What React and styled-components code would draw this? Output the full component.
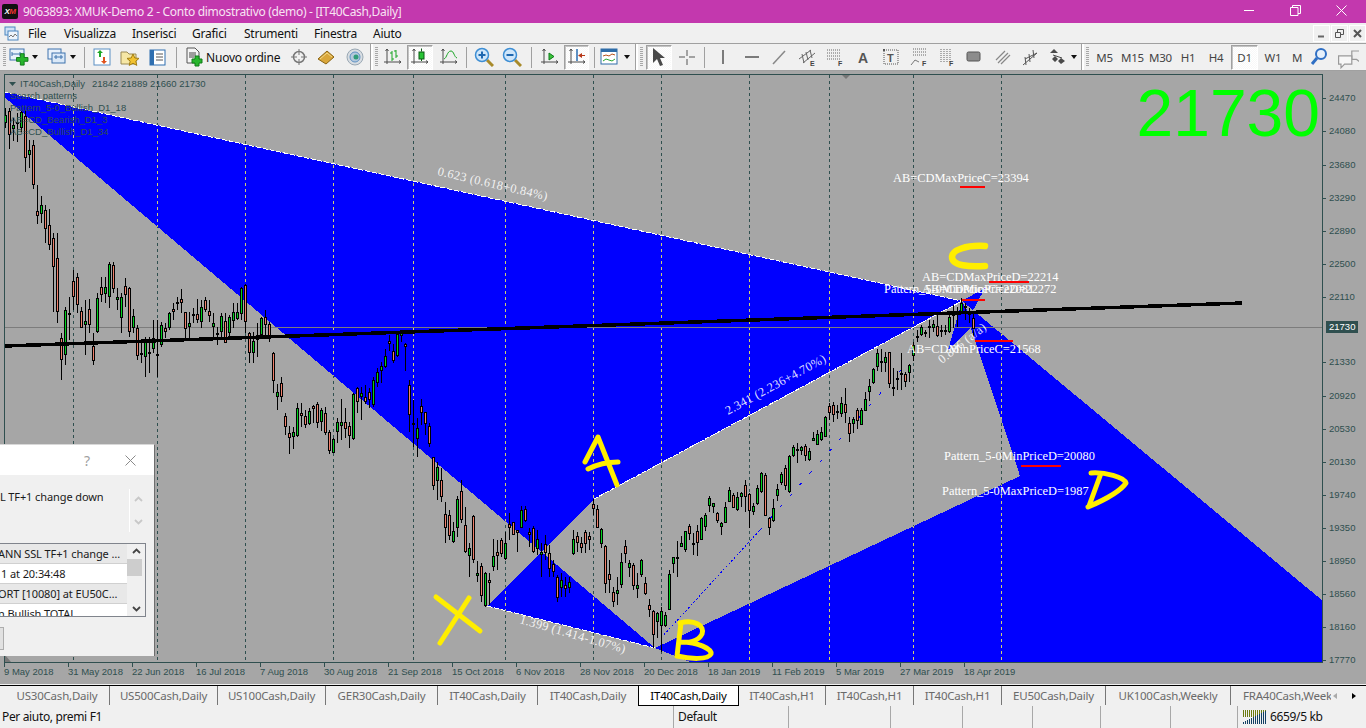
import React from 'react'
import styled, { createGlobalStyle } from 'styled-components'

const GlobalStyle = createGlobalStyle`
  html, body { margin: 0; padding: 0; width: 1366px; height: 728px; overflow: hidden; background: #f0f0f0; }
  body { font-family: "Noto Sans", sans-serif; }
`

const Window = styled.div`
  width: 1366px;
  height: 728px;
  display: flex;
  flex-direction: column;
  overflow: hidden;
`

/* title bar */
const TitleBar = styled.div`
  height: 23px;
  background: #c338ae;
  display: flex;
  align-items: center;
  color: #f8e3f3;
  font-size: 12px;
  letter-spacing: -0.3px;
`
const AppLogo = styled.div`
  width: 16px;
  height: 15px;
  margin: 0 5px 0 2px;
  background: #111;
  border-radius: 2px;
  color: #fff;
  font: italic bold 8px "Liberation Sans", sans-serif;
  letter-spacing: -0.5px;
  display: flex;
  align-items: center;
  justify-content: center;
  span { color: #e33; }
`
const WinControls = styled.div`
  margin-left: auto;
  padding-right: 2px;
  display: flex;
  align-self: flex-start;
`
const WinButton = styled.div`
  width: 46px;
  height: 20px;
  display: flex;
  align-items: center;
  justify-content: center;
`

/* menu */
const MenuBar = styled.div`
  height: 20px;
  display: flex;
  align-items: center;
  font-size: 12px;
  letter-spacing: -0.25px;
  color: #111;
  padding-left: 4px;
`
const MenuItem = styled.div`
  width: ${p => p.$w}px;
`
const MdiButtons = styled.div`
  margin-left: auto;
  display: flex;
  gap: 1px;
`
const MdiButton = styled.div`
  width: 17px;
  height: 17px;
  border: 1px solid #fff;
  box-sizing: border-box;
  display: flex;
  align-items: center;
  justify-content: center;
`

/* toolbar */
const Toolbar = styled.div`
  height: 26px;
  border-top: 1px solid #a0a0a0;
  border-bottom: 1px solid #a0a0a0;
  display: flex;
  align-items: center;
  background: #f0f0f0;
`
const Grip = styled.div`
  width: ${p => p.$w}px;
  height: 20px;
  flex: none;
  box-sizing: border-box;
  padding-left: ${p => p.$pad}px;
  &::before {
    content: '';
    display: block;
    width: 3px;
    height: 20px;
    background: repeating-linear-gradient(#a8a8a8 0 1px, transparent 1px 2px);
  }
`
const Sep = styled.div`
  width: ${p => p.$w}px;
  flex: none;
  display: flex;
  justify-content: center;
  &::before {
    content: '';
    width: 1px;
    height: 21px;
    background: #a0a0a0;
  }
`
const Break = styled.div`
  width: ${p => p.$w}px;
  flex: none;
  height: 26px;
  display: flex;
  justify-content: center;
  &::before {
    content: '';
    width: 2px;
    height: 26px;
    background: #fff;
    border-left: 1px solid #a0a0a0;
  }
`
const Spacer = styled.div`
  width: ${p => p.$w}px;
  flex: none;
`
const ToolButton = styled.div`
  width: ${p => p.$w}px;
  height: 25px;
  flex: none;
  box-sizing: border-box;
  display: flex;
  align-items: center;
  justify-content: center;
  font-size: 11.5px;
  color: #444;
  letter-spacing: -0.2px;
  ${p => p.$active && `
    border: 1px solid;
    border-color: #a0a0a0 #fff #fff #a0a0a0;
    box-shadow: inset 1px 1px 0 #c4c4c4;
    background: repeating-conic-gradient(#f8f8f8 0 25%, #fff 0 50%) 0 0 / 2px 2px;
    margin: 0 1px;
  `}
`
const OrderLabel = styled.div`
  width: ${p => p.$w}px;
  flex: none;
  font-size: 12px;
  letter-spacing: -0.2px;
  color: #111;
  white-space: nowrap;
`
const Caret = styled.div`
  width: ${p => p.$w}px;
  flex: none;
  display: flex;
  justify-content: center;
  &::before {
    content: '';
    border-left: 3.5px solid transparent;
    border-right: 3.5px solid transparent;
    border-top: 4px solid #111;
  }
`

/* chart */
const ChartPane = styled.div`
  position: relative;
  height: 613px;
  background: #a6a6a6;
  overflow: hidden;
`
const ChartSvg = styled.svg`
  display: block;
  width: 1366px;
  height: 613px;
`
const AxisText = styled.text`
  font: 9.5px "Liberation Sans", sans-serif;
  fill: #2f4f4f;
`
const ChartLabel = styled.text`
  font: 12.4px "Liberation Serif", serif;
  fill: #fff;
  letter-spacing: ${p => p.$spacing || 0}px;
`

/* dialog */
const Dialog = styled.div`
  position: absolute;
  left: 0;
  top: 373px;
  width: 155px;
  height: 212px;
  background: #f0f0f0;
  border-right: 1px solid #6d6d6d;
  border-top: 1px solid #d8d8d8;
  box-sizing: border-box;
  overflow: hidden;
  font-size: 11px;
  letter-spacing: -0.1px;
  color: #1a1a1a;
`
const DialogHead = styled.div`
  height: 30px;
  background: #fff;
  display: flex;
  align-items: center;
  justify-content: flex-end;
  gap: 35px;
  padding-right: 18px;
  color: #a0a0a0;
  font-size: 14px;
`
const DialogMessage = styled.div`
  height: 43px;
  margin-top: 14px;
  display: flex;
  justify-content: space-between;
  padding-right: 8px;
`
const MessageText = styled.div`
  margin-left: -12px;
  white-space: nowrap;
`
const MessageScroll = styled.div`
  width: 17px;
  border-left: 1px solid #fff;
  display: flex;
  flex-direction: column;
  justify-content: space-between;
  align-items: center;
  padding: 7px 0;
  box-sizing: border-box;
`
const ListBox = styled.div`
  width: 146px;
  height: 74px;
  margin-top: 11px;
  box-sizing: border-box;
  border: 1px solid #80848c;
  border-left: none;
  background: #fff;
  display: flex;
  overflow: hidden;
`
const ListRows = styled.div`
  width: 127px;
  flex: none;
  overflow: hidden;
`
const ListRow = styled.div`
  height: 20px;
  line-height: 19px;
  box-sizing: border-box;
  border-bottom: 1px solid #d0d0d0;
  background: ${p => (p.$alt ? '#e8e8e8' : '#fff')};
  white-space: nowrap;
  text-indent: ${p => p.$indent}px;
`
const ListScroll = styled.div`
  flex: 1;
  background: #f0f0f0;
  display: flex;
  flex-direction: column;
  align-items: center;
  justify-content: space-between;
  padding: 4px 0;
`
const ScrollThumb = styled.div`
  width: 15px;
  height: 17px;
  background: #cdcdcd;
  margin-bottom: 25px;
  align-self: flex-start;
`
const DialogButton = styled.div`
  width: 3px;
  height: 21px;
  margin-top: 10px;
  border: 1px solid #adadad;
  border-left: none;
  background: #e1e1e1;
`

/* tabs */
const TabBar = styled.div`
  height: 21px;
  box-sizing: border-box;
  padding: 1px 0 0 5px;
  display: flex;
  position: relative;
  font-size: 11.5px;
  letter-spacing: -0.22px;
  &::before {
    content: '';
    position: absolute;
    left: 0;
    right: 0;
    top: 1px;
    height: 1px;
    background: #000;
  }
`
const Tab = styled.div`
  width: ${p => p.$w}px;
  flex: none;
  height: 19px;
  margin-top: 1px;
  display: flex;
  align-items: center;
  justify-content: center;
  color: #6a6a6a;
  white-space: nowrap;
  overflow: hidden;
  box-sizing: border-box;
  border-right: ${p => (p.$sep ? '1px solid #777' : 'none')};
  background-clip: content-box;
  ${p => p.$active && `
    color: #000;
    background: #fff;
    border: 1px solid #000;
    border-top: none;
    height: 20px;
    position: relative;
  `}
`
const LastTab = styled(Tab)`
  justify-content: flex-start;
  padding-left: 12px;
`
const TabArrows = styled.div`
  display: flex;
  align-items: center;
  gap: 15px;
  padding: 1px 0 0 2px;
`
const TabArrow = styled.div`
  width: 0;
  height: 0;
  border-top: 3.5px solid transparent;
  border-bottom: 3.5px solid transparent;
  ${p => (p.$left ? `border-right: 4px solid #aaa;` : `border-left: 4px solid #000;`)}
`

/* status */
const StatusBar = styled.div`
  height: 23px;
  display: flex;
  align-items: center;
  font-size: 12px;
  letter-spacing: -0.35px;
  color: #111;
`
const StatusCell = styled.div`
  width: ${p => p.$w}px;
  height: 22px;
  flex: none;
  box-sizing: border-box;
  padding-left: ${p => p.$pad || 0}px;
  display: flex;
  align-items: center;
  gap: 3px;
  border-right: 1px solid #a8a8a8;
  &:last-child { border-right: none; }
`

/* toolbar icons */
const Ax = () => <path d="M4 2v15M1 15h17M2.5 4L4 2l1.5 2M16 13.500l2 1.500-2 1.500" fill="none" stroke="#4d4d4d" />
const icons = {
  newChart: <><rect x="1" y="2" width="14" height="11" fill="#e8f1fb" stroke="#3e73ad" /><path d="M3 7h10M3 5v4M11 5v4" stroke="#3e73ad" /><path d="M13 6h4v4h4v4h-4v4h-4v-4H9v-4h4z" transform="translate(-1 1) scale(.95)" fill="#27b52c" stroke="#107a18" /></>,
  profile: <><rect x="1" y="2" width="13" height="10" fill="#e8f1fb" stroke="#3e73ad" /><rect x="5" y="6" width="13" height="10" fill="#dbe9f8" stroke="#3e73ad" /><path d="M7 10h9M9 8v4M14 8v4" stroke="#3e73ad" /></>,
  trade: <><rect x="2" y="2" width="16" height="16" fill="#fff" stroke="#5b8fc4" /><path d="M7 10V6H5l3-3 3 3H9v4z" fill="#1fa826" /><path d="M11 10v4H9l3 3 3-3h-2v-4z" fill="#e0521c" /></>,
  folderStar: <><path d="M1 5h6l2 2h7v10H1z" fill="#f6e7a5" stroke="#9a8a55" /><path d="M13 7l1.800 4 4.200.4-3.200 2.800 1 4.200-3.800-2.200-3.800 2.200 1-4.200L7 11.400l4.200-.4z" fill="#f2c230" stroke="#a37e12" /></>,
  list: <><rect x="2" y="3" width="15" height="15" fill="#fff" stroke="#2f6fb0" /><rect x="2" y="3" width="4" height="15" fill="#2f6fb0" /><path d="M8 7h7M8 10h7M8 13h7" stroke="#555" /></>,
  newOrder: <><path d="M2 1h8l4 4v11H2z" fill="#f4f4f4" stroke="#555" /><path d="M4 6h7M4 8h7M4 10h5" stroke="#444" /><path d="M10 9h4v3h3v4h-3v3h-4v-3H7v-4h3z" fill="#27b52c" stroke="#107a18" /></>,
  target: <><circle cx="10" cy="10" r="5.500" fill="none" stroke="#777" strokeWidth="1.500" /><path d="M10 2v6M10 12v6M2 10h6M12 10h6" stroke="#777" /></>,
  book: <><path d="M2 12l9-8 7 6-8 7z" fill="#d9a63a" stroke="#8a6414" /><path d="M4 12l7-6 5 4" fill="none" stroke="#f2d98a" /></>,
  signal: <><circle cx="10" cy="10" r="8" fill="#d8dde2" stroke="#9aa8b4" /><circle cx="10" cy="10" r="5" fill="#b4c8dc" stroke="#5f92c4" /><circle cx="11" cy="10" r="2.500" fill="#2f9c7a" /></>,
  bars: <><Ax /><path d="M9 14V4M7 6h2M9 12h2M13 3v8M11 4h2M13 9h2" stroke="#1aa525" fill="none" /></>,
  candle: <><Ax /><rect x="9" y="5" width="5" height="7" fill="#27c334" stroke="#0b5a13" /><path d="M11.500 1.500v3M11.500 12v2" stroke="#0b5a13" /></>,
  line: <><Ax /><path d="M5 12c3-1 3-8 7-8 3 0 3 6 6 7" fill="none" stroke="#1aa525" /></>,
  zoomIn: <><path d="M13 13l6 6" stroke="#a88a2a" strokeWidth="3" /><circle cx="8" cy="8" r="6.500" fill="#cfe6fa" stroke="#3d8ed4" strokeWidth="1.500" /><path d="M4.500 8h7M8 4.500v7" stroke="#1f68b0" strokeWidth="2" /></>,
  zoomOut: <><path d="M13 13l6 6" stroke="#a88a2a" strokeWidth="3" /><circle cx="8" cy="8" r="6.500" fill="#cfe6fa" stroke="#3d8ed4" strokeWidth="1.500" /><path d="M4.500 8h7" stroke="#1f68b0" strokeWidth="2" /></>,
  auto: <><Ax /><path d="M9 6v7l5-3.500z" fill="#3cc43c" stroke="#0d7a1a" /></>,
  shift: <><Ax /><path d="M10 2v12" stroke="#2a6db0" strokeWidth="1.500" /><path d="M18 8h-3V6l-4 2.500 4 2.500V9h3z" fill="#b8391a" /></>,
  template: <><rect x="1" y="2" width="16" height="15" fill="#fff" stroke="#2e6ca8" /><rect x="1" y="2" width="16" height="3" fill="#2e6ca8" /><path d="M3 9l3-1 3 1 3-2 3 1" fill="none" stroke="#b4511c" /><path d="M3 14l3-2 3 1 3 1 3-2" fill="none" stroke="#27a82e" /></>,
  cursor: <path d="M4 1v15l4-4 3 7 3-1-3-7h5z" fill="#4a4a4a" />,
  cross: <path d="M10 3v6M10 12v6M2 10h6M12 10h6" stroke="#555" />,
  vline: <path d="M10 3v14" stroke="#555" strokeWidth="1.500" />,
  hline: <path d="M3 10h14" stroke="#555" strokeWidth="1.500" />,
  diag: <path d="M4 17L16 4" stroke="#888" strokeWidth="1.500" />,
  channel: <><path d="M2 12L14 3M6 16L18 6M5 7l2 9M9 5l2 8M13 3l2 8" stroke="#666" fill="none" /><text x="13" y="19" fontSize="7" fontWeight="700" fontFamily="Liberation Sans" fill="#444">E</text></>,
  fibo: <><path d="M2 3h14M2 6h14M2 9h14M2 12h14" stroke="#666" strokeDasharray="1 1" /><text x="13" y="19" fontSize="7" fontWeight="700" fontFamily="Liberation Sans" fill="#444">F</text></>,
  letter: <text x="5" y="16" fontSize="14" fontWeight="700" fontFamily="Liberation Sans" fill="#555">A</text>,
  textBox: <><rect x="3" y="3" width="14" height="14" fill="none" stroke="#555" strokeDasharray="1 1" /><rect x="2" y="2" width="2" height="2" fill="#555" /><text x="6" y="15" fontSize="11" fontWeight="700" fontFamily="Liberation Sans" fill="#555">T</text></>,
  fiboExp: <><path d="M4 2h14M4 5h14M4 8h14" stroke="#666" strokeDasharray="1 1" /><path d="M2 18l4-5 4 2" fill="none" stroke="#777" /><text x="13" y="19" fontSize="7" fontWeight="700" fontFamily="Liberation Sans" fill="#444">F</text></>,
  fiboTime: <><path d="M4 2v13M7 2v13M10 2v13M13 2v13" stroke="#666" strokeDasharray="1 1" /><text x="12" y="19" fontSize="7" fontWeight="700" fontFamily="Liberation Sans" fill="#444">F</text></>,
  rect: <rect x="2" y="5" width="13" height="9" rx="1.500" fill="#8c8c8c" stroke="#555" />,
  parallel: <path d="M3 13L12 4M5 16L15 6M8 17L17 8" stroke="#888" strokeWidth="1.200" />,
  pitch: <path d="M2 18L16 6M5 18L4 10M9 15L8 7M13 11L12 3M4 12l12-6" stroke="#555" fill="none" />,
  arrows: <><path d="M7 2l4 4H3zM8 9l3 3-3 3-3-3zM14 11l4 3-4 3-3-3z" fill="#4a4a4a" /><path d="M6 8l9 3" stroke="#4a4a4a" /></>,
  search: <><path d="M8 11l-5 6" stroke="#2f6fc4" strokeWidth="3" /><circle cx="12" cy="7" r="5" fill="#e6f0fb" stroke="#2f6fc4" strokeWidth="2" /></>,
  chat: <><path d="M9 8h9v7h-2l1 3-4-3H9z" transform="translate(5 -3)" fill="#eee" stroke="#999" /><path d="M2 8h11v7H7l-3 3v-3H2z" transform="translate(1 1)" fill="#f7f7f7" stroke="#999" /></>,
}

const Icon = ({ name, size = 20 }) => (
  <svg width={size} height={size} viewBox="0 0 20 20" style={{ display: 'block' }}>{icons[name]}</svg>
)

const tools = [
  ['grip', 7, 3], ['icon', 24, 'newChart', 20], ['caret', 8], ['gap', 6], ['icon', 24, 'profile'], ['caret', 8], ['sep', 14],
  ['icon', 22, 'trade'], ['icon', 34, 'folderStar'], ['icon', 22, 'list'], ['sep', 14],
  ['icon', 23, 'newOrder'], ['label', 80, 'Nuovo ordine'], ['icon', 26, 'target'], ['icon', 28, 'book'], ['icon', 30, 'signal'], ['break', 3],
  ['grip', 7, 2], ['icon', 26, 'bars'], ['icon', 28, 'candle', 20, true], ['gap', 2], ['icon', 26, 'line'], ['sep', 8],
  ['icon', 27, 'zoomIn'], ['icon', 29, 'zoomOut'], ['sep', 10], ['icon', 27, 'auto'], ['icon', 27, 'shift', 20, true], ['sep', 8],
  ['icon', 24, 'template'], ['caret', 10], ['break', 8],
  ['grip', 5, 0], ['icon', 28, 'cursor', 20, true], ['icon', 28, 'cross'], ['sep', 6],
  ['icon', 31, 'vline'], ['icon', 27, 'hline'], ['icon', 28, 'diag'], ['icon', 28, 'channel'], ['icon', 28, 'fibo'], ['icon', 28, 'letter'], ['icon', 28, 'textBox'],
  ['icon', 28, 'fiboExp'], ['icon', 28, 'fiboTime'], ['icon', 27, 'rect'], ['icon', 29, 'parallel'], ['icon', 27, 'pitch'], ['icon', 25, 'arrows'], ['caret', 9], ['break', 8],
  ['grip', 5, 0], ['text', 27, 'M5'], ['text', 29, 'M15'], ['text', 27, 'M30'], ['text', 28, 'H1'], ['text', 28, 'H4'], ['text', 29, 'D1', true],
  ['text', 28, 'W1'], ['text', 20, 'M'], ['icon', 23, 'search'], ['icon', 34, 'chat', 24],
]

const menuItems = [['File', 36], ['Visualizza', 68], ['Inserisci', 60], ['Grafici', 52], ['Strumenti', 70], ['Finestra', 59], ['Aiuto', 50]]

const tabs = [
  ['US30Cash,Daily', 105, 1], ['US500Cash,Daily', 108, 1], ['US100Cash,Daily', 108, 1], ['GER30Cash,Daily', 112, 1], ['IT40Cash,Daily', 100, 1],
  ['IT40Cash,Daily', 100, 0], ['IT40Cash,Daily', 101, 0, true], ['IT40Cash,H1', 87, 1], ['IT40Cash,H1', 88, 1], ['IT40Cash,H1', 88, 1],
  ['EU50Cash,Daily', 104, 1], ['UK100Cash,Weekly', 125, 1],
]

/* candles: top, bottom, high, low, bull, read off the chart in 1/3 px steps */
const seg1 = [
  [105,125,85,145,1],[93,163,85,208,0],[136,146,115,182,1],[125,128,100,185,1],[97,142,92,155,1],[108,232,90,275,0],[211,224,180,265,1],[196,312,180,328,0],
  [394,406,315,433,0],[376,400,347,430,1],[391,445,375,488,0],[434,490,388,510,0],[475,560,460,695,0],[535,695,460,730,0],[775,838,760,900,0],[690,823,680,855,1],
  [700,703,650,780,1],[604,650,570,690,0],[592,673,580,700,0],[694,743,680,745,0],[724,733,660,825,1],[688,733,658,760,0],[799,842,760,855,0],[655,754,640,760,1],
  [622,643,590,665,0],[622,641,590,670,1],[553,649,547,685,1],[556,625,547,640,0],[652,658,625,690,1],[652,712,640,760,1],[619,643,595,680,0],[625,754,620,770,0],
  [709,743,688,760,1],[745,826,735,840,0],[820,823,780,850,1],[785,826,770,890,1],[816,818,770,880,1],[775,805,720,820,1],[822,824,720,890,1],[736,793,725,800,1],
  [745,755,730,775,0],[700,743,697,750,1],[688,694,670,720,0],[667,670,650,690,1],[658,667,628,700,0],[697,745,695,780,0],[730,740,695,775,1],[703,706,685,730,1],
  [703,718,658,730,0],[682,724,660,745,1],[660,688,652,695,0],[692,703,660,725,0],[730,740,700,775,1],[760,762,740,795,1],[709,755,700,780,1],[724,787,700,790,0],
  [712,757,705,775,1],[697,721,670,745,1],[697,715,670,720,1],[625,700,620,720,1],[616,724,612,760,0],[760,817,755,850,0],[784,817,755,850,1],[772,778,730,830,0],
  [715,763,710,770,1],[712,733,690,770,0],[733,770,725,785,0],
]
const seg2 = [
  [160,242,155,278,0],[275,287,252,330,1],[250,290,232,305,0],[349,380,340,405,0],[400,413,378,462,0],[397,410,380,447,1],[325,407,310,410,1],[340,347,310,380,0],
  [349,374,330,385,0],[334,371,325,375,1],[317,323,315,368,0],[313,368,305,385,0],[331,365,325,392,1],[340,398,322,405,0],[397,452,390,462,0],[418,458,415,460,1],
  [367,395,355,430,1],[367,377,297,420,1],[367,386,325,415,0],[379,407,365,445,0],[283,416,280,420,1],[263,302,260,340,0],[280,290,262,360,1],[292,305,255,312,0],
  [277,298,265,325,0],[241,314,230,320,1],[215,245,205,262,1],[199,212,185,250,1],[169,199,148,205,1],[124,130,105,153,0],[154,182,133,190,0],[103,167,100,172,1],
  [100,107,95,125,1],[133,140,130,212,0],
]
const seg3 = [
  [15,103,0,155,0],[128,130,60,200,1],[145,175,115,230,1],[77,94,57,135,0],[97,130,95,165,0],[139,190,130,200,0],[232,316,230,330,0],[262,302,245,360,1],
  [301,349,265,365,0],[403,442,365,490,0],[405,464,390,480,0],[454,484,425,490,1],[358,442,348,470,1],[334,418,300,430,0],[436,515,380,520,0],[505,526,490,592,1],
  [408,538,405,550,0],[580,586,542,605,1],[559,646,550,665,0],[580,677,575,680,1],[601,607,580,675,0],[529,560,477,572,1],[517,526,480,570,0],[481,520,475,530,0],
  [488,532,455,540,1],[433,442,398,480,0],[427,463,425,465,0],[451,457,450,515,0],[391,442,378,445,1],[388,421,378,425,0],[457,463,445,500,0],[445,515,438,520,0],
  [478,505,450,525,1],[517,523,490,590,1],[491,515,465,540,0],[520,565,495,590,0],[553,574,540,590,0],[592,652,585,665,0],[601,622,580,652,1],[616,625,590,650,0],
  [607,622,590,640,1],[478,520,450,525,1],[469,487,455,515,0],[490,502,470,520,0],[457,490,450,520,0],[468,478,455,510,0],[373,385,358,405,0],[388,441,375,445,0],
  [448,490,445,505,1],[498,610,495,640,0],[583,598,540,640,0],[637,664,622,680,0],[631,640,590,675,1],[547,613,520,625,1],[499,520,480,550,0],[550,562,540,590,1],
  [556,616,550,630,0],[616,625,580,655,1],[541,583,538,590,1],[610,640,590,645,0],[676,688,658,712,0],[694,763,690,805,0],[700,725,695,775,1],[694,736,680,815,1],
  [706,736,695,740,1],[583,688,570,690,1],[532,550,530,580,1],[532,535,483,590,1],[488,496,468,500,1],[454,508,452,515,1],[439,460,433,480,0],[488,490,460,525,1],[454,487,435,528,0],
]
const seg4 = [
  [534,596,530,597,1],[526,560,520,572,1],[475,497,468,515,1],[490,500,488,518,1],[520,540,515,550,0],[550,558,545,585,1],[502,547,485,550,1],[451,483,440,485,1],
  [466,501,460,505,0],[472,507,455,512,1],[460,470,455,500,1],[436,470,420,515,0],[463,510,460,565,0],[499,514,490,525,1],[445,490,435,495,1],[400,455,397,458,1],
  [405,525,400,528,0],[535,562,530,585,0],[505,540,478,545,1],[448,467,432,482,1],[403,428,395,435,1],[385,436,375,450,0],[349,455,345,460,1],[322,347,315,352,1],
  [328,330,310,368,1],[322,332,318,345,1],[319,346,312,362,0],[334,358,325,362,1],[293,298,275,300,1],[283,312,270,315,1],[277,297,260,302,1],[232,289,228,292,1],
  [199,217,190,240,0],[194,220,185,245,0],[214,216,195,238,1],[190,220,170,232,1],[193,217,145,250,0],[250,280,230,305,0],[238,250,232,280,1],[211,241,205,267,0],
  [211,253,205,255,1],[176,208,155,210,1],[139,154,118,183,1],[88,128,85,132,1],[40,79,28,92,1],[62,64,28,95,1],[52,67,35,95,1],[37,130,35,145,0],[140,142,85,167,1],
  [113,116,92,150,1],[100,103,40,150,1],[103,124,95,140,0],[76,96,72,125,1],[16,45,5,62,1],
]
const seg5 = [
  [318,322,300,335,1],[291,313,285,318,1],[305,307,300,320,1],[288,290,270,325,1],[283,291,270,305,1],[287,313,255,320,0],[300,302,285,320,1],[300,302,285,315,1],
  [262,304,255,310,1],[250,256,225,295,0],[250,252,230,290,1],[220,243,205,250,1],[228,230,220,270,1],[250,252,235,280,1],[265,295,250,320,0],
]
const candles = [
  ...seg1.map((c, i) => ({ x: 5 + i * 4, y0: 80, c })),
  ...seg2.map((c, i) => ({ x: 273 + i * 4, y0: 300, c })),
  ...seg3.map((c, i) => ({ x: 409 + i * 4, y0: 380, c })),
  ...seg4.map((c, i) => ({ x: 701 + i * 4, y0: 340, c })),
  ...seg5.map((c, i) => ({ x: 917 + i * 4, y0: 230, c })),
]

const gridX = [73, 157, 245, 333, 413, 505, 593, 661, 749, 829, 913, 1001]
const patternFill = [
  'M-4,90 L962,301 L655,648Z',
  'M487,606 L594,499 L655,648Z',
  'M594,499 L962,301 L655,648Z',
  'M962,301 L2052,1207 L655,648Z',
  'M962,301 L1020,476 L655,648Z',
  'M962,301 L948,350 L971,328Z',
  'M962,301 L985,288 L970,316Z',
].join(' ')
const prices = [
  [24470, 98], [24080, 131], [23680, 165], [23290, 198], [22890, 231], [22500, 264], [22110, 297], [21330, 362], [20920, 396],
  [20530, 429], [20130, 462], [19740, 495], [19350, 528], [18950, 561], [18560, 594], [18160, 627], [17770, 660],
]
const dates = ['9 May 2018', '31 May 2018', '22 Jun 2018', '16 Jul 2018', '7 Aug 2018', '30 Aug 2018', '21 Sep 2018', '15 Oct 2018', '6 Nov 2018', '28 Nov 2018', '20 Dec 2018', '18 Jan 2019', '11 Feb 2019', '5 Mar 2019', '27 Mar 2019', '18 Apr 2019']
const redLines = [[960, 985, 187], [989, 1029, 282], [962, 985, 300], [975, 1013, 341], [1021, 1061, 466]]
const labels = [
  ['AB=CDMaxPriceC=23394', 893, 182], ['AB=CDMaxPriceD=22214', 922, 281], ['Pattern_5-0MinPriceC=22081', 884, 293], ['AB=CDMinPriceD=22272', 922, 293],
  ['AB=CDMinPriceC=21568', 907, 353], ['Pattern_5-0MinPriceD=20080', 944, 460], ['Pattern_5-0MaxPriceD=1987', 942, 495],
]
const rotated = [
  ['0.623 (0.618+0.84%)', 437, 175, 13],
  ['2.341 (2.236+4.70%)', 728, 415, -28.5],
  ['1.399 (1.414-1.07%)', 519, 623, 16],
  ['0.886 (a/a)', 942, 364, -38],
]
const ink = [
  'M985,246 C966,245 952,250 952,257 C952,266 970,267 985,266',
  'M585,462 L598,437 L617,485 M588,469 C598,464 608,462 618,462',
  'M436,597 L480,631 M469,598 L440,643',
  'M681,623 L677,656 M680,623 C695,619 705,626 702,634 C698,642 688,643 681,642 C698,642 712,649 711,654 C708,660 690,659 677,656',
  'M1100,476 L1089,506 M1091,473 C1105,472 1124,477 1126,483 C1120,492 1102,501 1088,507',
]

const Chart = () => (
  <ChartSvg viewBox="0 71 1366 613">
    <defs>
      <clipPath id="plot"><rect x="5" y="75" width="1317" height="587" /></clipPath>
      <clipPath id="filled"><path d={patternFill} clipRule="evenodd" /></clipPath>
    </defs>
    <g clipPath="url(#plot)" shapeRendering="crispEdges">
      <path d={patternFill} fill="#0000ff" fillRule="evenodd" />
      {gridX.map(x => <path key={x} d={`M${x + 0.5},75V662`} stroke="#2f4f4f" strokeDasharray="3 3" />)}
      <g clipPath="url(#filled)">
        {gridX.map(x => <path key={x} d={`M${x + 0.5},75V662`} stroke="#d0d070" strokeDasharray="3 3" />)}
      </g>
      <path d="M5,327.500H1323" stroke="#7c7c7c" />
      <path d="M-4,90 L962,301" stroke="#fff" strokeDasharray="5 2" />
      <path d="M594,499 L962,301" stroke="#fff" strokeDasharray="5 1" />
      <path d="M487,606 L655,648" stroke="#fff" strokeDasharray="5 2" />
      <path d="M661,638 L760,530" stroke="#0000ff" strokeDasharray="2 2" />
      <path d="M760,530 L908,362" stroke="#0000ff" strokeDasharray="3 12" />
      {candles.map(({ x, y0, c }, i) => {
        const top = y0 + c[0] / 3
        const bottom = y0 + c[1] / 3
        return (
          <g key={i}>
            <path d={`M${x + 0.5},${Math.round(y0 + c[2] / 3)}V${Math.round(y0 + c[3] / 3)}`} stroke="#000" />
            <rect x={x - 0.5} y={Math.round(top) + 0.5} width="2" height={Math.max(1, Math.round(bottom - top))} fill={c[4] ? '#00d21e' : '#f0806c'} stroke="#000" />
          </g>
        )
      })}
      <path d="M5,346 L1242,303" stroke="#000" strokeWidth="3.500" />
      {redLines.map(([a, b, y]) => <path key={y} d={`M${a},${y}H${b}`} stroke="#f00" strokeWidth="2" />)}
    </g>
    <path d="M4.500,74.500H1322.500V662.500H4.500Z" fill="none" stroke="#2f4f4f" shapeRendering="crispEdges" />
    <polygon points="842,75 850,75 846,79" fill="#777" />
    <polygon points="5,655 5,662 11,662" fill="#777" />
    <polygon points="9,82 16,82 12.500,86" fill="#2f4f4f" />
    <AxisText x="20" y="87">IT40Cash,Daily</AxisText>
    <AxisText x="92" y="87">21842 21889 21660 21730</AxisText>
    <AxisText x="10" y="99">Search patterns</AxisText>
    <AxisText x="10" y="111">Pattern_5-0_Bullish_D1_18</AxisText>
    <AxisText x="10" y="123">AB=CD_Bearish_D1_3</AxisText>
    <AxisText x="10" y="135">AB=CD_Bullish_D1_34</AxisText>
    {prices.map(([p, y]) => (
      <g key={p}>
        <path d={`M1323,${y + 0.5}h3`} stroke="#2f4f4f" />
        <AxisText x="1329" y={y + 3}>{p}</AxisText>
      </g>
    ))}
    <rect x="1326" y="321" width="32" height="12" fill="#2f4f4f" />
    <text x="1329" y="330" fill="#fff" fontSize="9.5" fontFamily="Liberation Sans">21730</text>
    {dates.map((d, i) => (
      <g key={d}>
        <path d={`M${4.5 + i * 64},663v4`} stroke="#2f4f4f" />
        <AxisText x={4 + i * 64} y="675">{d}</AxisText>
      </g>
    ))}
    <text x="1320" y="136" textAnchor="end" fill="#00ff00" fontSize="66" fontFamily="Liberation Sans">21730</text>
    {labels.map(([t, x, y]) => <ChartLabel key={t} x={x} y={y}>{t}</ChartLabel>)}
    {rotated.map(([t, x, y, a]) => <ChartLabel key={t} $spacing={0.35} x={x} y={y} transform={`rotate(${a} ${x} ${y})`} fillOpacity="0.88">{t}</ChartLabel>)}
    <g fill="none" stroke="#ffee00" strokeWidth="5" strokeLinecap="round" strokeLinejoin="round">
      {ink.map((d, i) => <path key={i} d={d} strokeWidth={i === 0 ? 6.5 : 5} />)}
    </g>
  </ChartSvg>
)

const Chevron = ({ up, color }) => (
  <svg width="9" height="6" viewBox="0 0 9 6" style={{ display: 'block' }}>
    <path d={up ? 'M1 5l3.500-3.500L8 5' : 'M1 1l3.500 3.500L8 1'} fill="none" stroke={color} strokeWidth="1.800" />
  </svg>
)

export default function App() {
  return (
    <>
      <GlobalStyle />
      <Window>
        <TitleBar>
          <AppLogo>X<span>M</span></AppLogo>
          9063893: XMUK-Demo 2 - Conto dimostrativo (demo) - [IT40Cash,Daily]
          <WinControls>
            <WinButton><svg width="11" height="11"><path d="M0 5.500h10" stroke="#fff" /></svg></WinButton>
            <WinButton><svg width="11" height="11"><path d="M.5 2.500h7.500v8H.5zM2.500 2.500V.5h8v8H8" fill="none" stroke="#fff" /></svg></WinButton>
            <WinButton><svg width="11" height="11"><path d="M.5.5l10 10M10.500.5l-10 10" stroke="#fff" /></svg></WinButton>
          </WinControls>
        </TitleBar>
        <MenuBar>
          <MenuItem $w={24}>
            <svg width="15" height="15" viewBox="0 0 15 15" style={{ display: 'block' }}>
              <rect x="1" y="1" width="10" height="8" fill="#cfe2f5" stroke="#4b86c0" />
              <rect x="4" y="5" width="10" height="9" fill="#eef5fc" stroke="#4b86c0" />
              <path d="M5 11l2-2 2 2 2-3 2 2" fill="none" stroke="#777" />
            </svg>
          </MenuItem>
          {menuItems.map(([t, w]) => <MenuItem key={t} $w={w}>{t}</MenuItem>)}
          <MdiButtons>
            <MdiButton><svg width="9" height="9"><path d="M1 7.500h6" stroke="#666" strokeWidth="2" /></svg></MdiButton>
            <MdiButton><svg width="9" height="9"><path d="M.5 3.500h5v5h-5zM2.500 3V.5h6v5H6" fill="none" stroke="#555" /></svg></MdiButton>
            <MdiButton><svg width="9" height="9"><path d="M1 1l7 7M8 1L1 8" stroke="#555" strokeWidth="2" /></svg></MdiButton>
          </MdiButtons>
        </MenuBar>
        <Toolbar>
          {tools.map((t, i) => {
            if (t[0] === 'grip') return <Grip key={i} $w={t[1]} $pad={t[2]} />
            if (t[0] === 'caret') return <Caret key={i} $w={t[1]} />
            if (t[0] === 'gap') return <Spacer key={i} $w={t[1]} />
            if (t[0] === 'sep') return <Sep key={i} $w={t[1]} />
            if (t[0] === 'break') return <Break key={i} $w={t[1]} />
            if (t[0] === 'label') return <OrderLabel key={i} $w={t[1]}>{t[2]}</OrderLabel>
            if (t[0] === 'text') return <ToolButton key={i} $w={t[3] ? t[1] - 2 : t[1]} $active={t[3]}>{t[2]}</ToolButton>
            return <ToolButton key={i} $w={t[4] ? t[1] - 2 : t[1]} $active={t[4]}><Icon name={t[2]} size={t[3] || 20} /></ToolButton>
          })}
        </Toolbar>
        <ChartPane>
          <Chart />
          <Dialog>
            <DialogHead><span>?</span>
              <svg width="11" height="11"><path d="M.5.5l10 10M10.500.5l-10 10" stroke="#8a8a8a" /></svg>
            </DialogHead>
            <DialogMessage>
              <MessageText>SSL TF+1 change down</MessageText>
              <MessageScroll><Chevron up color="#c8c8c8" /><Chevron color="#c8c8c8" /></MessageScroll>
            </DialogMessage>
            <ListBox>
              <ListRows>
                <ListRow $alt $indent={-2}>ANN SSL TF+1 change …</ListRow>
                <ListRow $indent={1}>1 at 20:34:48</ListRow>
                <ListRow $alt $indent={-2}>ORT [10080] at EU50C…</ListRow>
                <ListRow $indent={-2}>n Bullish TOTAL</ListRow>
              </ListRows>
              <ListScroll>
                <Chevron up color="#444" />
                <ScrollThumb />
                <Chevron color="#444" />
              </ListScroll>
            </ListBox>
            <DialogButton />
          </Dialog>
        </ChartPane>
        <TabBar>
          {tabs.map(([t, w, sep, active], i) => <Tab key={i} $w={w} $sep={sep} $active={active}>{t}</Tab>)}
          <LastTab $w={100}>FRA40Cash,Weekly</LastTab>
          <TabArrows><TabArrow $left /><TabArrow /></TabArrows>
        </TabBar>
        <StatusBar>
          <StatusCell $w={674} $pad={2}>Per aiuto, premi F1</StatusCell>
          <StatusCell $w={115} $pad={4}>Default</StatusCell>
          <StatusCell $w={102} />
          <StatusCell $w={72} />
          <StatusCell $w={70} />
          <StatusCell $w={68} />
          <StatusCell $w={70} />
          <StatusCell $w={67} />
          <StatusCell $w={128} $pad={5}>
            <svg width="24" height="14" viewBox="0 0 24 14" style={{ display: 'block' }}>
              {[...Array(12)].map((_, i) => (
                <g key={i}>
                  <path d={`M${i * 2 + 0.5},0V7`} stroke="#6b7a10" />
                  <path d={`M${i * 2 + 0.5},${Math.max(1, 12 - i)}V14`} stroke="#123f63" />
                </g>
              ))}
            </svg>
            6659/5 kb
          </StatusCell>
        </StatusBar>
      </Window>
    </>
  )
}
